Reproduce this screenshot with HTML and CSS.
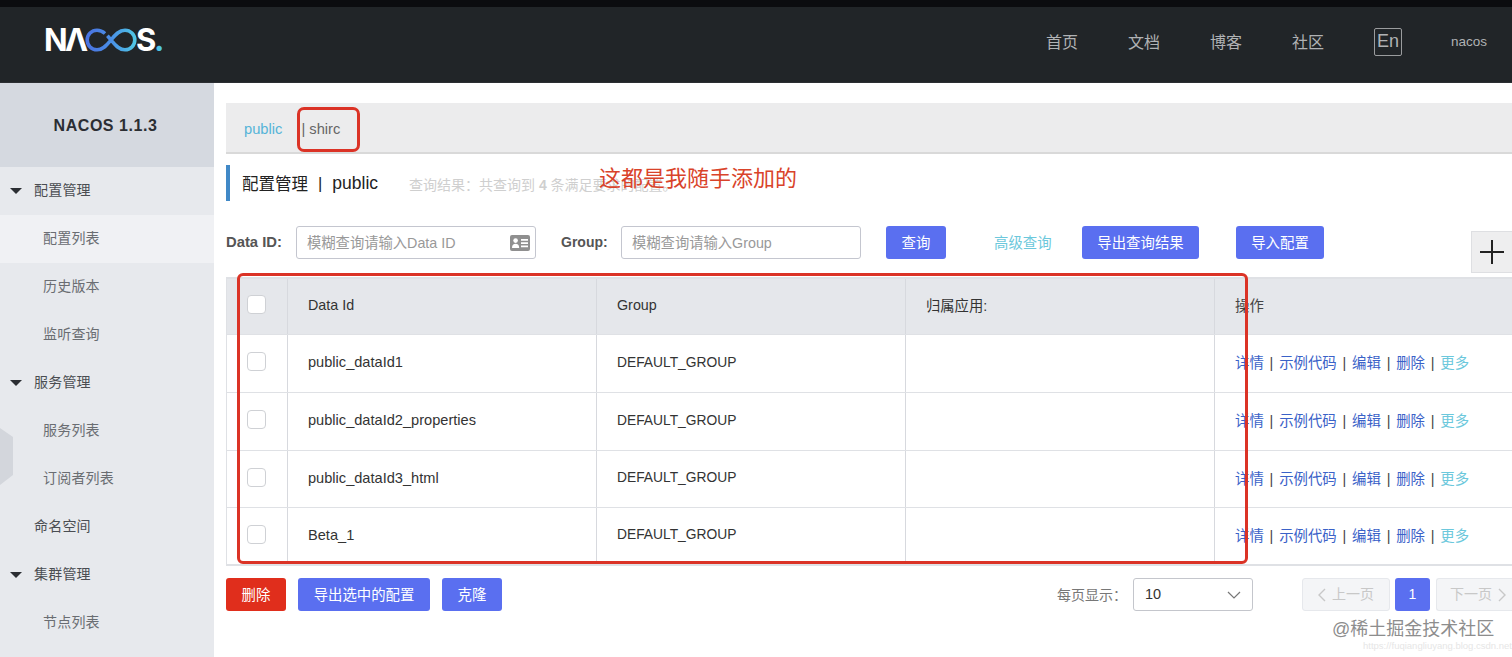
FILE: index.html
```html
<!DOCTYPE html>
<html lang="zh-CN">
<head>
<meta charset="utf-8">
<title>Nacos</title>
<link rel="stylesheet" href="styles.css">
</head>
<body>
<div class="page">
  <div class="topstrip"></div>
  <header class="header">
    <div class="logo" aria-label="NACOS.">
      <span class="logo-n">N</span><span class="logo-a">Λ</span>
      <svg class="logo-ring" viewBox="0 0 54 24" width="54" height="24">
        <defs>
          <linearGradient id="ring" x1="0" x2="1" y1="0" y2="0">
            <stop offset="0" stop-color="#4a72e0"/>
            <stop offset="0.5" stop-color="#4a8fe6"/>
            <stop offset="1" stop-color="#4fc6e6"/>
          </linearGradient>
        </defs>
        <path d="M21 5.5C18.5 3.2 16 2.2 13 2.2A9.8 9.8 0 0 0 13 21.8C19 21.8 23 17 27 12C31 7 35 2.2 41 2.2A9.8 9.8 0 0 1 41 21.8C35 21.8 31 17 27 12C25.8 10.5 24.6 9 23.4 7.7" fill="none" stroke="url(#ring)" stroke-width="3.6"/>
      </svg>
      <span class="logo-s">S</span><span class="logo-dot">.</span>
    </div>
    <nav class="nav">
      <a>首页</a><a>文档</a><a>博客</a><a>社区</a>
      <span class="lang">En</span>
      <span class="user">nacos</span>
    </nav>
  </header>
  <div class="body">
    <aside class="sidebar">
      <div class="brand">NACOS 1.1.3</div>
      <div class="menu-item parent"><i class="caret"></i>配置管理</div>
      <div class="menu-item child active">配置列表</div>
      <div class="menu-item child">历史版本</div>
      <div class="menu-item child">监听查询</div>
      <div class="menu-item parent"><i class="caret"></i>服务管理</div>
      <div class="menu-item child">服务列表</div>
      <div class="menu-item child">订阅者列表</div>
      <div class="menu-item parent">命名空间</div>
      <div class="menu-item parent"><i class="caret"></i>集群管理</div>
      <div class="menu-item child">节点列表</div>
      <svg class="collapse" viewBox="0 0 14 58" width="14" height="58"><path d="M0 0L13 9V47L0 57Z" fill="#d3d6dc"/></svg>
    </aside>
    <main class="main">
      <div class="tabs"><span class="tab-public">public</span><span class="tab-shirc">| shirc</span></div>
      <div class="title-row">
        <h1 class="title">配置管理<span class="title-sep">|</span><span class="title-ns">public</span></h1>
        <span class="result">查询结果：共查询到 <b>4</b> 条满足要求的配置。</span>
      </div>
      <div class="search-row">
        <label class="field-label">Data ID:</label>
        <div class="input input-data">
          <span>模糊查询请输入Data ID</span>
          <svg viewBox="0 0 20 16" width="20" height="16"><rect width="20" height="16" rx="2" fill="#8f8f8f"/><circle cx="5.6" cy="5.6" r="2.3" fill="#fff"/><path d="M2 13c0-3 1.4-4.3 3.6-4.3S9.200 10 9.200 13Z" fill="#fff"/><path d="M11 4h7v1.800h-7zM11 7.200h7V9h-7zM11 10.400h7v1.800h-7z" fill="#fff"/></svg>
        </div>
        <label class="field-label label-group">Group:</label>
        <div class="input input-group"><span>模糊查询请输入Group</span></div>
        <button class="btn btn-query">查询</button>
        <a class="adv">高级查询</a>
        <button class="btn btn-export">导出查询结果</button>
        <button class="btn btn-import">导入配置</button>
      </div>
      <table class="table">
        <colgroup><col class="c-check"><col class="c-col"><col class="c-col"><col class="c-col"><col></colgroup>
        <thead>
          <tr><th><span class="check"></span></th><th>Data Id</th><th>Group</th><th>归属应用:</th><th class="ops">操作</th></tr>
        </thead>
        <tbody>
          <tr><td><span class="check"></span></td><td class="id">public_dataId1</td><td class="grp">DEFAULT_GROUP</td><td></td><td class="ops"><a>详情</a><i>|</i><a>示例代码</a><i>|</i><a>编辑</a><i>|</i><a>删除</a><i>|</i><a class="more">更多</a></td></tr>
          <tr><td><span class="check"></span></td><td class="id">public_dataId2_properties</td><td class="grp">DEFAULT_GROUP</td><td></td><td class="ops"><a>详情</a><i>|</i><a>示例代码</a><i>|</i><a>编辑</a><i>|</i><a>删除</a><i>|</i><a class="more">更多</a></td></tr>
          <tr class="short"><td><span class="check"></span></td><td class="id">public_dataId3_html</td><td class="grp">DEFAULT_GROUP</td><td></td><td class="ops"><a>详情</a><i>|</i><a>示例代码</a><i>|</i><a>编辑</a><i>|</i><a>删除</a><i>|</i><a class="more">更多</a></td></tr>
          <tr><td><span class="check"></span></td><td class="id">Beta_1</td><td class="grp">DEFAULT_GROUP</td><td></td><td class="ops"><a>详情</a><i>|</i><a>示例代码</a><i>|</i><a>编辑</a><i>|</i><a>删除</a><i>|</i><a class="more">更多</a></td></tr>
        </tbody>
      </table>
      <div class="footer-row">
        <button class="btn btn-del">删除</button>
        <button class="btn btn-sel">导出选中的配置</button>
        <button class="btn btn-clone">克隆</button>
        <span class="page-label">每页显示：</span>
        <div class="select"><span>10</span><svg viewBox="0 0 14 8" width="14" height="8"><path d="M1 1l6 6 6-6" fill="none" stroke="#777" stroke-width="1.200"/></svg></div>
        <button class="pg pg-prev"><svg viewBox="0 0 8 14" width="8" height="14"><path d="M7 1L1 7l6 6" fill="none" stroke="#c8c8c8" stroke-width="1.400"/></svg><span>上一页</span></button>
        <button class="pg-cur">1</button>
        <button class="pg pg-next"><span>下一页</span><svg viewBox="0 0 8 14" width="8" height="14"><path d="M1 1l6 6-6 6" fill="none" stroke="#c8c8c8" stroke-width="1.400"/></svg></button>
      </div>
      <button class="add" aria-label="add"><svg viewBox="0 0 24 24" width="24" height="24"><path d="M12 0v24M0 12h24" stroke="#222" stroke-width="2"/></svg></button>
      <div class="mark mark-tab"></div>
      <div class="mark mark-table"></div>
      <div class="note">这都是我随手添加的</div>
    </main>
  </div>
  <div class="watermark">@稀土掘金技术社区</div>
  <div class="watermark-url">https://fuqiangliuyang.blog.csdn.net</div>
</div>
</body>
</html>
```
FILE: styles.css
```css
* { box-sizing: border-box; }
html, body { margin: 0; padding: 0; height: 657px; overflow: hidden; background: #fff; }
body { font-family: "Liberation Sans", "Noto Sans CJK SC", sans-serif; font-size: 14px; color: #333; }
.page { position: relative; width: 1512px; height: 657px; overflow: hidden; display: flex; flex-direction: column; }
.topstrip { height: 7px; background: #0b0c0f; }

.header { height: 76px; flex: none; background: #212528; display: flex; align-items: center; justify-content: space-between; padding: 0 24px 0 44px; border-bottom: 1px solid #2c2f33; }
.logo { display: flex; align-items: center; font-family: Inter, "Liberation Sans", sans-serif; font-weight: 700; font-size: 31px; line-height: 1; color: #fff; margin-top: -10px; width: 118px; }
.logo-n { width: 21px; }
.logo-a { width: 20px; }
.logo-ring { flex: none; margin-left: -1px; }
.logo-s { margin-left: -2px; width: 20px; }
.logo-dot { color: #4fc6e6; margin-left: -2px; }
.nav { display: flex; align-items: center; gap: 50px; color: #b0b2b4; font-size: 16px; margin-top: -8px; }
.lang { width: 28px; height: 28px; border: 1px solid #9a9c9e; border-radius: 2px; display: flex; align-items: center; justify-content: center; font-size: 18px; color: #b0b2b4; margin-top: 2px; }
.user { font-size: 13.500px; width: 37px; white-space: nowrap; margin-left: -1px; margin-top: 2px; }

.body { flex: 1; display: flex; min-height: 0; }
.sidebar { position: relative; width: 214px; flex: none; background: #e7e9ed; overflow: hidden; }
.brand { height: 84px; background: #d5d9e0; display: flex; align-items: center; justify-content: center; font-size: 16px; letter-spacing: .55px; font-weight: 700; color: #2b2e33; padding: 1px 3px 0 0; }
.menu-item { height: 48px; display: flex; align-items: center; font-size: 14px; letter-spacing: .2px; padding-bottom: 4px; }
.menu-item.parent { position: relative; padding-left: 34px; color: #4a4d52; }
.menu-item.child { padding-left: 43px; color: #6a6d72; }
.menu-item.active { background: #f0f1f4; }
.caret { position: absolute; left: 10px; top: 21px; width: 0; height: 0; border-left: 6px solid transparent; border-right: 6px solid transparent; border-top: 6px solid #2b2e33; }
.collapse { position: absolute; left: 0; top: 345px; }

.main { position: relative; flex: 1; padding: 20px 0 0 12px; min-width: 0; }
.tabs { height: 51px; background: #ececed; border-bottom: 2px solid #d9d9d9; display: flex; align-items: center; padding: 2px 0 0 18px; font-size: 14.700px; }
.tab-public { color: #56b4d8; }
.tab-shirc { margin-left: 19px; color: #666; }
.title-row { margin-top: 11px; height: 36px; border-left: 4px solid #4189c7; padding-left: 12px; display: flex; align-items: center; }
.title { margin: 0; font-size: 16.500px; font-weight: 400; color: #222; display: flex; align-items: center; }
.title-sep { margin: 0 10px; }
.title-ns { font-size: 17.500px; }
.result { margin-left: 31px; color: #cfcfcf; font-size: 14px; padding-top: 1px; }

.search-row { margin-top: 25px; height: 33px; display: flex; align-items: center; }
.field-label { font-weight: 700; font-size: 14.800px; color: #555; width: 70px; flex: none; padding-bottom: 1px; }
.label-group { width: 60px; margin-left: 25px; font-size: 14px; }
.input { height: 33px; width: 240px; flex: none; border: 1px solid #c4c6cf; border-radius: 3px; display: flex; align-items: center; justify-content: space-between; padding: 0 5px 0 10px; color: #999; font-size: 14.300px; }
.input span { padding-bottom: 3px; }
.btn { border: 0; border-radius: 3px; height: 33px; background: #5a6ff0; color: #fff; font: inherit; font-size: 14.400px; padding: 0 0 3px; flex: none; }
.btn-query { width: 60px; margin-left: 25px; }
.adv { margin-left: 48px; color: #6cc8dc; width: 88px; flex: none; padding-bottom: 3px; font-size: 14.400px; }
.btn-export { width: 117px; }
.btn-import { width: 88px; margin-left: 37px; }

.table { margin-top: 18px; width: 1286px; table-layout: fixed; border-collapse: collapse; border-top: 2px solid #dfe1e5; border-left: 1px solid #dfe1e5; border-bottom: 2px solid #dfe1e5; }
.c-check { width: 61px; }
.c-col { width: 309px; }
.table th, .table td { padding: 0 0 3px 20px; text-align: left; font-weight: 400; font-size: 14.300px; color: #333; border-right: 1px solid #d7d9de; border-bottom: 1px solid #dfe1e5; }
.table th:first-child, .table td:first-child { padding-left: 19px; }
.table th:last-child, .table td:last-child { border-right: 0; }
.table thead tr { height: 56px; background: #e5e7eb; }
.table tbody tr { height: 58px; }
.table tbody tr.short { height: 57px; }
.table .id { font-size: 14.600px; padding-bottom: 2px; }
.table .grp { font-size: 13.800px; padding-bottom: 2px; }
.table .ops { color: #3a5fcd; font-size: 14.400px; }
.table th.ops { color: #444; }
.ops a { color: #3a62c8; }
.ops i { font-style: normal; color: #444; margin: 0 5.800px; }
.ops a.more { color: #6cc8dc; }
.check { display: block; width: 19px; height: 19px; margin-left: 1px; background: #fff; border: 1px solid #cfd1d5; border-radius: 4px; }

.footer-row { margin-top: 12px; display: flex; align-items: center; height: 33px; }
.btn-del { width: 60px; background: #e02e1c; }
.btn-sel { width: 132px; margin-left: 12px; }
.btn-clone { width: 60px; margin-left: 12px; }
.page-label { margin-left: auto; color: #777; font-size: 14px; width: 76px; flex: none; padding-bottom: 2px; }
.select { width: 120px; height: 33px; flex: none; border: 1px solid #c4c6cc; border-radius: 3px; display: flex; align-items: center; justify-content: space-between; padding: 0 11px; color: #333; font-size: 14.500px; }
.select span { padding-bottom: 2px; }
.pg { height: 33px; flex: none; background: #f4f5f7; border: 1px solid #e6e8ec; border-radius: 3px; color: #c8c8c8; font: inherit; font-size: 14px; display: flex; align-items: center; justify-content: center; gap: 6px; padding: 0; }
.pg span { padding-bottom: 3px; }
.pg-prev { width: 88px; margin-left: 49px; }
.pg-cur { width: 35px; height: 33px; flex: none; margin-left: 5px; background: #5a6ff0; color: #fff; border: 0; border-radius: 3px; font: inherit; font-size: 14px; padding: 0 0 2px; }
.pg-next { width: 76px; margin-left: 6px; justify-content: flex-start; padding-left: 13px; border-right: 0; border-radius: 3px 0 0 3px; }

.add { position: absolute; right: 0; top: 148px; width: 41px; height: 42px; background: #eeeeef; border: 1px solid #dedfe2; border-right: 0; padding: 0; display: flex; align-items: center; justify-content: center; }
.mark { position: absolute; border: 3px solid #db3326; pointer-events: none; }
.mark-tab { left: 83px; top: 24px; width: 63px; height: 45px; border-radius: 7px; }
.mark-table { left: 23px; top: 190px; width: 1011px; height: 291px; border-radius: 6px; }
.note { position: absolute; left: 385px; top: 81px; font-size: 22px; line-height: 30px; color: #d9432a; white-space: nowrap; }

.watermark { position: absolute; left: 1332px; top: 617px; font-size: 18px; line-height: 24px; color: #8d8d8d; white-space: nowrap; }
.watermark-url { position: absolute; left: 1363px; top: 639px; font-size: 9.500px; line-height: 14px; color: #e6e6e6; white-space: nowrap; }
```
